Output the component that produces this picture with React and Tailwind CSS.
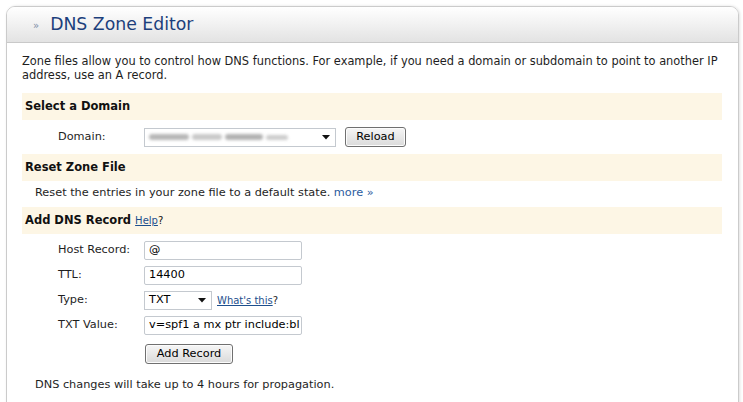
import React from "react";

const font = "font-['Verdana','DejaVu_Sans',sans-serif]";

function Arrow() {
  return (
    <svg width="8" height="5" viewBox="0 0 8 5" className="shrink-0">
      <path d="M0 0H8L4 4.5Z" fill="#111" />
    </svg>
  );
}

function Bar({ children }) {
  return (
    <div className="h-[27px] bg-[#fdf6e5] flex items-center pl-[3px] font-bold text-[11.5px] text-[#111]">
      {children}
    </div>
  );
}

function Field({ label, children }) {
  return (
    <div className="flex items-center h-[18px]">
      <div className="w-[86px] text-[11.3px] text-[#1e1e1e]">{label}</div>
      {children}
    </div>
  );
}

function TextBox({ value }) {
  return (
    <div className="w-[158px] h-[19px] border border-[#c4c9cf] rounded-[2px] bg-white flex items-center pl-[4px] text-[11.3px] text-black overflow-hidden whitespace-nowrap">
      {value}
    </div>
  );
}

function Button({ children, w }) {
  return (
    <div
      className={`${w} h-[20px] border border-[#707070] rounded-[3px] bg-gradient-to-b from-[#f6f6f6] to-[#dadada] flex items-center justify-center text-[11.3px] text-black shadow-[inset_0_0_0_1px_#fcfcfc]`}
    >
      {children}
    </div>
  );
}

export default function App() {
  return (
    <div className={`${font} bg-white w-[743px] h-[402px] overflow-hidden pt-[6px] pl-[6px] pr-[4px]`}>
      <div className="border border-[#cbcbcb] rounded-t-[9px] h-[410px] shadow-[1px_0_3px_rgba(0,0,0,0.12)]">
        <div className="h-[36px] rounded-t-[8px] border-b border-[#c9c9c9] bg-gradient-to-b from-white to-[#e3e3e3] flex items-center">
          <span className="ml-[26px] text-[10px] text-[#7f8fa8] mt-[1px]">»</span>
          <span className="ml-[11px] text-[17.3px] text-[#1c3f7c] leading-none">DNS Zone Editor</span>
        </div>

        <div className="px-[15px] pr-[16px] pt-[11px]">
          <p className="text-[11.4px] leading-[14px] text-[#1e1e1e]">
            Zone files allow you to control how DNS functions. For example, if you need a domain or subdomain to point to another IP address, use an A record.
          </p>

          <div className="mt-[11px]">
            <Bar>Select a Domain</Bar>
          </div>

          <div className="mt-[7px] flex items-center h-[20px] pl-[36px]">
            <div className="w-[86px] text-[11.3px] text-[#1e1e1e]">Domain:</div>
            <div className="w-[192px] h-[19px] border border-[#c4c9cf] bg-white flex items-center pl-[4px] pr-[5px]">
              <div className="flex-1 flex items-center gap-[3px] blur-[1.5px]">
                <div className="w-[40px] h-[6px] bg-[#b7b7b7] rounded-full" />
                <div className="w-[30px] h-[6px] bg-[#c9c9c9] rounded-full" />
                <div className="w-[38px] h-[6px] bg-[#b2b2b2] rounded-full" />
                <div className="w-[22px] h-[5px] bg-[#cccccc] rounded-full" />
              </div>
              <Arrow />
            </div>
            <div className="ml-[9px]">
              <Button w="w-[61px]">Reload</Button>
            </div>
          </div>

          <div className="mt-[7px]">
            <Bar>Reset Zone File</Bar>
          </div>

          <p className="mt-[5px] pl-[13px] text-[11.3px] leading-[14px] text-[#1e1e1e]">
            Reset the entries in your zone file to a default state.{" "}
            <a className="text-[#2b5c9e]">more »</a>
          </p>

          <div className="mt-[7px]">
            <Bar>
              Add DNS Record
              <span className="ml-[4px] font-normal text-[10px]">
                <a className="underline text-[#1d4f8d]">Help</a>?
              </span>
            </Bar>
          </div>

          <div className="mt-[7px] pl-[36px] flex flex-col gap-[7px]">
            <Field label="Host Record:">
              <TextBox value="@" />
            </Field>
            <Field label="TTL:">
              <TextBox value="14400" />
            </Field>
            <Field label="Type:">
              <div className="w-[68px] h-[19px] border border-[#c4c9cf] bg-white flex items-center justify-between pl-[4px] pr-[5px] text-[11.3px] text-black">
                TXT
                <Arrow />
              </div>
              <span className="ml-[5px] text-[10px] text-[#1e1e1e]">
                <a className="underline text-[#1d4f8d]">What's this</a>?
              </span>
            </Field>
            <Field label="TXT Value:">
              <TextBox value="v=spf1 a mx ptr include:bl" />
            </Field>
            <div className="pl-[87px] pt-[3px]">
              <Button w="w-[88px]">Add Record</Button>
            </div>
          </div>

          <p className="mt-[14px] pl-[13px] text-[11.3px] leading-[14px] text-[#1e1e1e]">
            DNS changes will take up to 4 hours for propagation.
          </p>
        </div>
      </div>
    </div>
  );
}
